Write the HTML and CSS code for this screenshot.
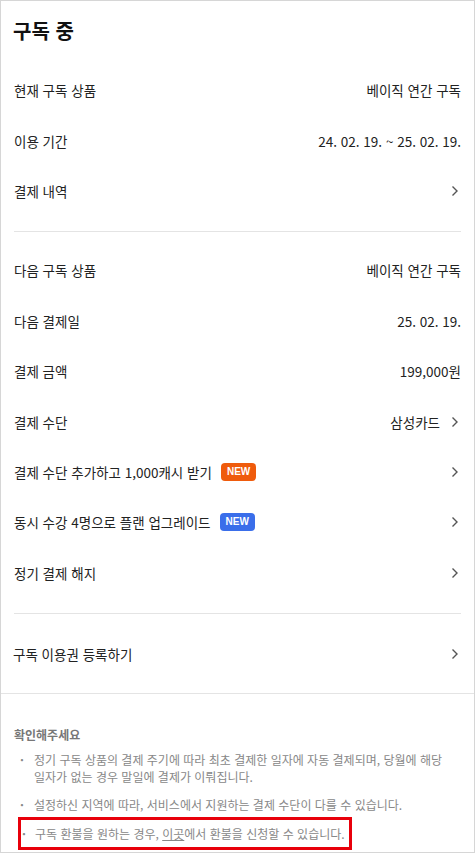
FILE: index.html
```html
<!DOCTYPE html>
<html lang="ko">

<head>
    <meta charset="UTF-8" />
    <meta name="viewport" content="width=device-width, initial-scale=1" />
    <title>구독 중</title>
    <link rel="stylesheet" href="styles.css">
</head>

<body>
    <div class="page">
        <h1 class="title">구독 중</h1>

        <section class="group group-first">
            <div class="row">
                <span class="label">현재 구독 상품</span>
                <span class="value">베이직 연간 구독</span>
            </div>
            <div class="row">
                <span class="label">이용 기간</span>
                <span class="value">24. 02. 19. ~ 25. 02. 19.</span>
            </div>
            <a class="row link" href="#">
                <span class="label">결제 내역</span>
                <span class="chevron"><svg width="8" height="12" viewBox="0 0 8 12"><path d="M1.5 1.5 6 6l-4.5 4.5" /></svg></span>
            </a>
        </section>

        <section class="group">
            <div class="row">
                <span class="label">다음 구독 상품</span>
                <span class="value">베이직 연간 구독</span>
            </div>
            <div class="row">
                <span class="label">다음 결제일</span>
                <span class="value">25. 02. 19.</span>
            </div>
            <div class="row">
                <span class="label">결제 금액</span>
                <span class="value">199,000원</span>
            </div>
            <a class="row link" href="#">
                <span class="label">결제 수단</span>
                <span class="value">삼성카드<span class="chevron"><svg width="8" height="12" viewBox="0 0 8 12"><path d="M1.5 1.5 6 6l-4.5 4.5" /></svg></span></span>
            </a>
            <a class="row link" href="#">
                <span class="label">결제 수단 추가하고 1,000캐시 받기<span class="badge badge-orange">NEW</span></span>
                <span class="chevron"><svg width="8" height="12" viewBox="0 0 8 12"><path d="M1.5 1.5 6 6l-4.5 4.5" /></svg></span>
            </a>
            <a class="row link" href="#">
                <span class="label">동시 수강 4명으로 플랜 업그레이드<span class="badge badge-blue">NEW</span></span>
                <span class="chevron"><svg width="8" height="12" viewBox="0 0 8 12"><path d="M1.5 1.5 6 6l-4.5 4.5" /></svg></span>
            </a>
            <a class="row link" href="#">
                <span class="label">정기 결제 해지</span>
                <span class="chevron"><svg width="8" height="12" viewBox="0 0 8 12"><path d="M1.5 1.5 6 6l-4.5 4.5" /></svg></span>
            </a>
        </section>

        <section class="group group-last">
            <a class="row link" href="#">
                <span class="label">구독 이용권 등록하기</span>
                <span class="chevron"><svg width="8" height="12" viewBox="0 0 8 12"><path d="M1.5 1.5 6 6l-4.5 4.5" /></svg></span>
            </a>
        </section>

        <section class="notice">
            <h2>확인해주세요</h2>
            <ul>
                <li>정기 구독 상품의 결제 주기에 따라 최초 결제한 일자에 자동 결제되며, 당월에 해당 일자가 없는 경우 말일에 결제가 이뤄집니다.</li>
                <li>설정하신 지역에 따라, 서비스에서 지원하는 결제 수단이 다를 수 있습니다.</li>
                <li class="highlight">구독 환불을 원하는 경우, <a href="#">이곳</a>에서 환불을 신청할 수 있습니다.</li>
            </ul>
        </section>
    </div>
</body>

</html>
```

FILE: styles.css
```css
/* Reset & base */
* {
    margin: 0;
    padding: 0;
    box-sizing: border-box;
    font-family: 'Noto Sans CJK KR', 'Noto Sans', sans-serif;
}

body {
    background-color: #fff;
    color: #222;
}

a {
    color: inherit;
    text-decoration: none;
}

/* Page frame */
.page {
    width: 475px;
    height: 853px;
    border: 1px solid #d6d6d6;
    overflow: hidden;
}

.title {
    height: 64px;
    padding: 15px 12px 0;
    font-size: 20px;
    font-weight: 700;
    color: #111;
}

/* Groups of rows */
.group {
    margin: 0 13px;
    padding: 13px 0 15px;
    border-bottom: 1px solid #e4e4e4;
}

.group-first {
    padding-top: 0;
    padding-bottom: 15px;
}

.group-last {
    margin: 0;
    padding: 15px 13px 14px 12px;
}

.group-last .row {
    height: 50px;
}

.row {
    display: flex;
    align-items: center;
    justify-content: space-between;
    height: 50.4px;
    font-size: 13.5px;
    color: #222;
}

.label {
    display: flex;
    align-items: center;
}

.value {
    display: flex;
    align-items: center;
}

.chevron {
    display: flex;
    align-items: center;
    margin-right: 2px;
}

.value .chevron {
    margin-left: 11px;
}

.chevron path {
    fill: none;
    stroke: #555;
    stroke-width: 1.4;
}

.badge {
    margin-left: 9px;
    padding: 1px 6px;
    border-radius: 4px;
    font-size: 10px;
    font-weight: 700;
    line-height: 16px;
    color: #fff;
    font-family: 'Liberation Sans', sans-serif;
}

.badge-orange {
    background-color: #ef5b0c;
}

.badge-blue {
    background-color: #3a6eea;
}

/* Notice */
.notice {
    padding: 32px 28px 0 13px;
}

.notice h2 {
    font-size: 12px;
    font-weight: 700;
    color: #777;
    margin-bottom: 8px;
}

.notice ul {
    list-style: none;
}

.notice li {
    position: relative;
    padding-left: 20px;
    margin-bottom: 11px;
    font-size: 12px;
    line-height: 17px;
    color: #888;
}

.notice li::before {
    content: '·';
    position: absolute;
    left: 6px;
    top: 0;
    font-weight: 700;
}

.notice li a {
    text-decoration: underline;
}

.notice li.highlight {
    width: 334px;
    margin-left: 4px;
    margin-top: -7px;
    padding: 5px 0 5px 14px;
    border: 3px solid #e8000b;
}

.notice li.highlight::before {
    left: 1px;
    top: 5px;
}
```
